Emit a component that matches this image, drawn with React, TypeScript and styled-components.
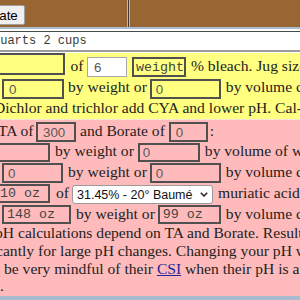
import React from 'react';
import styled, { createGlobalStyle } from 'styled-components';

const Global = createGlobalStyle`
  html, body { margin: 0; padding: 0; width: 300px; height: 300px; overflow: hidden; background: #fff; }
  #root { width: 300px; height: 300px; overflow: hidden; }
`;

const Page = styled.div`
  width: 300px;
  height: 300px;
  overflow: hidden;
  display: flex;
  flex-direction: column;
  font-family: "Liberation Serif", "Times New Roman", serif;
  font-size: 15.6px;
  color: #222;
`;

const Toolbar = styled.div`
  flex: none;
  height: 27px;
  background: #996633;
  border-bottom: 2px solid #a9bbcf;
  display: flex;
  align-items: flex-start;
`;

const ToolButton = styled.button`
  flex: none;
  box-sizing: border-box;
  margin: 5px 0 0 -45px;
  width: 70px;
  height: 20px;
  padding: 0 6px;
  background: #efefef;
  border: 1px solid #a0a0a0;
  border-radius: 2px;
  font: 13.33px "Liberation Sans", Arial, sans-serif;
  color: #000;
`;

const CellDivider = styled.div`
  flex: none;
  width: 1px;
  height: 27px;
  margin-left: 102px;
  background: #3c3c3c;
  border-left: 1px solid #a9bbcf;
  border-right: 1px solid #a9bbcf;
`;

const Result = styled.div`
  flex: none;
  margin-top: 2px;
  height: 18px;
  border-top: 1px solid #4a4a4a;
  border-bottom: 2px solid #9c9c9c;
  margin-bottom: 1px;
  background: #fff;
  font: 12px/18px "Liberation Mono", "Courier New", monospace;
  color: #3a3a3a;
  white-space: nowrap;
`;

const ResultText = styled.span`
  display: inline-block;
  margin-left: -7px;
`;

const Section = styled.div<{ $bg: string }>`
  flex: none;
  display: flex;
  flex-direction: column;
  background: ${p => p.$bg};
`;

const Rule = styled.div`
  flex: none;
  height: 1px;
  background: #f3e6d8;
`;

const Row = styled.div<{ $h: number }>`
  flex: none;
  display: flex;
  align-items: flex-start;
  height: ${p => p.$h}px;
  white-space: nowrap;
`;

const Words = styled.span<{ $ml?: number; $mt?: number }>`
  flex: none;
  white-space: nowrap;
  line-height: 18px;
  margin: ${p => p.$mt ?? 0}px 0 0 ${p => p.$ml ?? 0}px;
`;

const Field = styled.input<{
  $w: number;
  $h?: number;
  $mt?: number;
  $ml?: number;
  $light?: boolean;
  $bg?: string;
  $mono?: boolean;
  $pl?: number;
}>`
  flex: none;
  box-sizing: border-box;
  width: ${p => p.$w}px;
  height: ${p => p.$h ?? 20}px;
  margin: ${p => p.$mt ?? 0}px 0 0 ${p => p.$ml ?? 0}px;
  padding: 0 0 0 ${p => p.$pl ?? 4}px;
  border: ${p => (p.$light ? '1px solid #a8a8a8' : '2px solid #505050')};
  border-radius: 0;
  background: ${p => p.$bg ?? 'transparent'};
  font: ${p => (p.$mono ? '13.33px "Liberation Mono", "Courier New", monospace' : '13.33px "Liberation Sans", Arial, sans-serif')};
  color: ${p => (p.$mono ? '#444' : '#5a5a5a')};
  outline: none;
`;

const PickerWrap = styled.span<{ $ml?: number; $mt?: number }>`
  flex: none;
  position: relative;
  display: inline-flex;
  margin: ${p => p.$mt ?? 0}px 0 0 ${p => p.$ml ?? 0}px;
`;

const Picker = styled.select`
  box-sizing: border-box;
  appearance: none;
  width: 141px;
  height: 19px;
  margin: 0;
  background: #fff;
  border: 1px solid #9a9a9a;
  border-radius: 3px;
  font: 12.5px "Liberation Sans", Arial, sans-serif;
  color: #111;
  padding: 0 0 0 4px;
  outline: none;
`;

const Chevron = styled.svg`
  position: absolute;
  left: 128px;
  top: 7px;
  width: 8px;
  height: 5px;
  pointer-events: none;
`;

const Note = styled.div`
  flex: none;
  display: flex;
  flex-direction: column;
  padding-bottom: 1px;
`;

const NoteLine = styled.div<{ $ml: number }>`
  height: 17.8px;
  line-height: 17.8px;
  white-space: nowrap;
  margin-left: ${p => p.$ml}px;
`;

const Link = styled.a`
  color: #23239a;
  text-decoration: underline;
`;

const Footer = styled.div`
  flex: 1;
  background: #a9bbcf;
`;

export default function App() {
  return (
    <Page>
      <Global />
      <Toolbar>
        <ToolButton>Calculate</ToolButton>
        <CellDivider />
      </Toolbar>
      <Result>
        <ResultText>quarts 2 cups</ResultText>
      </Result>

      <Section $bg="#ffff80">
        <Row $h={24}>
          <Field $w={75} $h={22} $ml={-10} readOnly value="" />
          <Words $ml={5.5} $mt={4}>of</Words>
          <Field $w={40} $ml={3.4} $mt={4} $light $bg="#fff" $pl={6} readOnly value="6" />
          <Field $w={54} $ml={5} $mt={4} $mono $pl={2} readOnly value="weight" />
          <Words $ml={5} $mt={4}>% bleach. Jug size is</Words>
        </Row>
        <Row $h={22}>
          <Field $w={62} $ml={2} $mt={2} $pl={5} readOnly value="0" />
          <Words $ml={4} $mt={1}>by weight or</Words>
          <Field $w={71} $ml={3} $mt={2} $pl={4} readOnly value="0" />
          <Words $ml={5} $mt={1}>by volume cups</Words>
        </Row>
        <Row $h={20}>
          <Words $ml={-6} $mt={0}>Dichlor and trichlor add CYA and lower pH. Cal-hypo</Words>
        </Row>
      </Section>
      <Rule />

      <Section $bg="#ffbbbb">
        <Row $h={22}>
          <Words $ml={-2} $mt={2}>TA of</Words>
          <Field $w={40} $ml={2.4} $mt={2} $pl={5} readOnly value="300" />
          <Words $ml={4} $mt={2}>and Borate of</Words>
          <Field $w={39} $ml={4} $mt={2} $pl={5} readOnly value="0" />
          <Words $ml={2} $mt={2}>:</Words>
        </Row>
        <Row $h={21}>
          <Field $w={60} $h={19} $ml={-10} $mt={1} readOnly value="" />
          <Words $ml={5} $mt={0}>by weight or</Words>
          <Field $w={62} $h={19} $ml={4} $mt={1} $pl={3} readOnly value="0" />
          <Words $ml={5} $mt={0}>by volume of water</Words>
        </Row>
        <Row $h={21}>
          <Field $w={61} $ml={2} $mt={0} $pl={4} readOnly value="0" />
          <Words $ml={5} $mt={0}>by weight or</Words>
          <Field $w={71} $ml={3} $mt={0} $pl={4} readOnly value="0" />
          <Words $ml={5} $mt={0}>by volume cups</Words>
        </Row>
        <Row $h={21}>
          <Field $w={54} $h={19} $ml={-4} $mt={0} $mono $pl={2} readOnly value="10 oz" />
          <Words $ml={6} $mt={0}>of</Words>
          <PickerWrap $ml={3} $mt={1}>
            <Picker defaultValue="b">
              <option value="a">14.5% - 10° Baumé</option>
              <option value="b">31.45% - 20° Baumé</option>
            </Picker>
            <Chevron viewBox="0 0 8 5">
              <path d="M0.8 0.8 L4 4 L7.2 0.8" fill="none" stroke="#222" strokeWidth="1.5" />
            </Chevron>
          </PickerWrap>
          <Words $ml={5} $mt={0}>muriatic acid</Words>
        </Row>
        <Row $h={19}>
          <Field $w={69} $h={19} $ml={2} $mt={0} $mono $pl={3} readOnly value="148 oz" />
          <Words $ml={5} $mt={0}>by weight or</Words>
          <Field $w={63} $h={19} $ml={3} $mt={0} $mono $pl={3} readOnly value="99 oz" />
          <Words $ml={5} $mt={0}>by volume cups</Words>
        </Row>
        <Note>
          <NoteLine $ml={-5}>pH calculations depend on TA and Borate. Results may vary</NoteLine>
          <NoteLine $ml={-4}>cantly for large pH changes. Changing your pH will</NoteLine>
          <NoteLine $ml={4}>
            be very mindful of their <Link href="#csi">CSI</Link> when their pH is at
          </NoteLine>
          <NoteLine $ml={0}>.</NoteLine>
        </Note>
      </Section>
      <Footer />
    </Page>
  );
}
